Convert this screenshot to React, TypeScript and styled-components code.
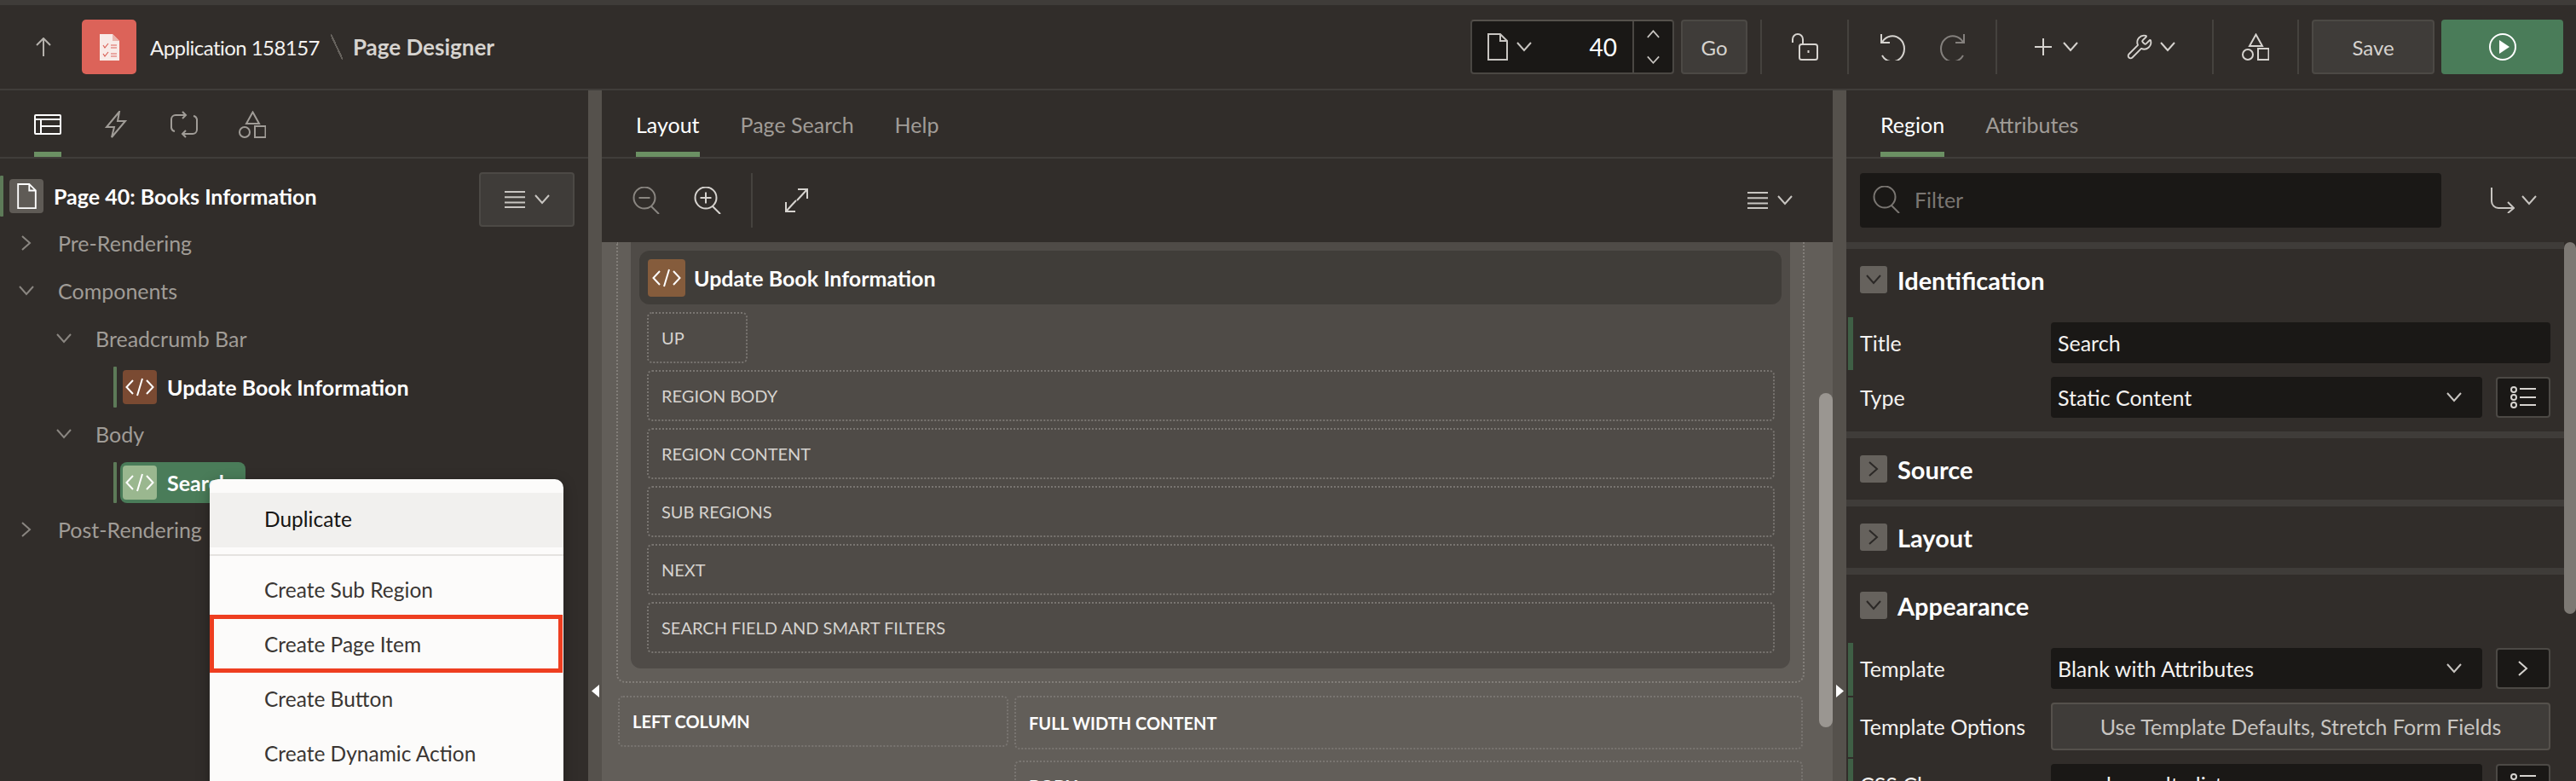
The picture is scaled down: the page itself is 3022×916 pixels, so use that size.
import * as React from "react";
import styled, { createGlobalStyle } from "styled-components";
import { Wrench } from "lucide-react";

const GlobalStyle = createGlobalStyle`
  html, body {
    margin: 0;
    height: 100%;
    overflow: hidden;
    background: #312d2a;
  }
  * {
    box-sizing: border-box;
  }
`;

const Page = styled.div`
  position: relative;
  width: 3022px;
  height: 916px;
  overflow: hidden;
  display: flex;
  flex-direction: column;
  background: #312d2a;
  color: #f1efed;
  font-family: Lato, "Liberation Sans", sans-serif;
  font-size: 25px;
  border-top: 6px solid #3f3c39;
`;

const Header = styled.header`
  flex: none;
  height: 100px;
  display: flex;
  align-items: center;
  padding: 18px 15px 18px 42px;
  border-bottom: 2px solid #403d3a;
`;

const BackArrow = styled.span`
  width: 54px;
  display: flex;
  color: #b5b1ac;
`;

const AppBadge = styled.div`
  width: 64px;
  height: 64px;
  margin-right: 16px;
  border-radius: 5px;
  background: #dc6359;
  display: flex;
  align-items: center;
  justify-content: center;
`;

const AppName = styled.span`
  color: #f4f2f0;
  font-size: 24px;
  letter-spacing: -0.55px;
`;

const Slash = styled.span`
  width: 14px;
  height: 30px;
  margin: 0 12px 0 13px;
  background: linear-gradient(
    to top right,
    transparent 46%,
    #66625d 46%,
    #66625d 54%,
    transparent 54%
  );
`;

const ScreenName = styled.span`
  color: #d6d3cf;
  font-size: 26px;
  font-weight: 700;
`;

const HeaderActions = styled.div`
  margin-left: auto;
  display: flex;
  align-items: center;
`;

const PageSwitch = styled.div`
  width: 239px;
  height: 64px;
  display: flex;
  background: #1a1816;
  border: 2px solid #4a4743;
  border-top-color: #55514c;
  border-radius: 4px;
  color: #c8c5c1;
`;

const PageNumber = styled.div`
  flex: 1;
  display: flex;
  align-items: center;
  padding-left: 18px;
  gap: 10px;
`;

const PageValue = styled.span`
  margin-left: auto;
  margin-right: 18px;
  color: #fff;
  font-size: 28px;
`;

const Spinner = styled.div`
  width: 47px;
  display: flex;
  flex-direction: column;
  align-items: center;
  justify-content: space-around;
  border-left: 2px solid #4a4743;
`;

const HeaderButton = styled.button<{ $width: number; $primary?: boolean }>`
  width: ${(p) => p.$width}px;
  height: 64px;
  display: flex;
  align-items: center;
  justify-content: center;
  padding: 0;
  font: inherit;
  font-size: 24px;
  color: ${(p) => (p.$primary ? "#fff" : "#d6d3cf")};
  background: ${(p) => (p.$primary ? "#4a7c59" : "#3f3c39")};
  border: ${(p) => (p.$primary ? "none" : "2px solid #4c4945")};
  border-radius: 4px;
`;

const GoButton = styled(HeaderButton)`
  margin: 0 15px 0 8px;
`;

const SaveButton = styled(HeaderButton)`
  margin: 0 8px 0 15px;
`;

const ToolGroup = styled.div<{ $width: number; $gap: number }>`
  width: ${(p) => p.$width}px;
  height: 64px;
  display: flex;
  align-items: center;
  justify-content: center;
  gap: ${(p) => p.$gap}px;
  color: #d6d3cf;
  border-left: 2px solid #45423e;
`;

const LastToolGroup = styled(ToolGroup)`
  border-right: 2px solid #45423e;
`;

const ToolPair = styled.span<{ $gap: number }>`
  display: flex;
  align-items: center;
  gap: ${(p) => p.$gap}px;
`;

const Glyph = styled.svg<{ $dim?: boolean }>`
  display: block;
  flex: none;
  fill: none;
  stroke: currentColor;
  stroke-width: 2;
  opacity: ${(p) => (p.$dim ? 0.5 : 1)};
`;

const ArrowGlyph = styled(Glyph)`
  fill: #fff;
  stroke: none;
`;

const Workspace = styled.main`
  flex: 1;
  min-height: 0;
  display: flex;
`;

const Panel = styled.section<{ $width: number }>`
  position: relative;
  flex: none;
  width: ${(p) => p.$width}px;
  display: flex;
  flex-direction: column;
  min-height: 0;
`;

const Splitter = styled.div`
  flex: none;
  width: 16px;
  padding: 697px 0 0 4px;
  background: #55514c;
  color: #fff;
`;

const TabBar = styled.nav<{ $gap: number }>`
  flex: none;
  height: 80px;
  display: flex;
  gap: ${(p) => p.$gap}px;
  padding-left: 40px;
  border-bottom: 2px solid #403d3a;
`;

const Tab = styled.div<{ $active?: boolean }>`
  height: 78px;
  display: flex;
  align-items: center;
  padding-top: 8px;
  color: ${(p) => (p.$active ? "#fff" : "#a09c97")};
  border-bottom: 6px solid ${(p) => (p.$active ? "#6b9063" : "transparent")};
`;

const Tree = styled.div`
  flex: 1;
  padding-top: 16px;
`;

const TreeRow = styled.div<{ $level: number }>`
  height: 56px;
  display: flex;
  align-items: center;
  padding-left: ${(p) => p.$level * 44 + 8}px;
  padding-bottom: 2px;
  color: #a09c97;
`;

const Toggle = styled.span`
  width: 60px;
  padding-left: 14px;
  color: #8a8681;
`;

const NodeRow = styled.div<{ $indent: number }>`
  height: 56px;
  display: flex;
  align-items: center;
  padding-left: ${(p) => p.$indent}px;
`;

const NodeAccent = styled.span`
  width: 4px;
  height: 48px;
  margin-right: 4px;
  background: #5d7a58;
  border-radius: 1px;
`;

const NodePill = styled.div<{ $selected?: boolean }>`
  height: 48px;
  display: flex;
  align-items: center;
  gap: 12px;
  padding: 0 17px 0 3px;
  border-radius: 8px;
  color: #fff;
  font-weight: 700;
  background: ${(p) => (p.$selected ? "#4a7c59" : "transparent")};
`;

const NodeIcon = styled.span<{ $color: string }>`
  width: 40px;
  height: 40px;
  display: flex;
  align-items: center;
  justify-content: center;
  border-radius: 4px;
  color: #fff;
  background: ${(p) => p.$color};
`;

const TreeMenuButton = styled.button`
  align-self: flex-start;
  width: 112px;
  height: 64px;
  margin: 0 16px 0 auto;
  display: flex;
  align-items: center;
  justify-content: center;
  gap: 11px;
  padding: 0;
  color: #c8c5c1;
  background: #3f3c39;
  border: 2px solid #4c4945;
  border-radius: 4px;
`;

const Toolbar = styled.div`
  flex: none;
  height: 98px;
  display: flex;
  align-items: center;
  padding: 0 0 0 36px;
`;

const ZoomButton = styled.span<{ $dim?: boolean }>`
  width: 72px;
  display: flex;
  color: ${(p) => (p.$dim ? "#8a8681" : "#d6d3cf")};
`;

const ToolbarRule = styled.span`
  width: 2px;
  height: 64px;
  margin: 0 38px 0 -5px;
  background: #45423e;
`;

const ExpandIcon = styled.span`
  display: flex;
  color: #d6d3cf;
`;

const ToolbarEnd = styled.span`
  margin-left: auto;
  margin-right: 47px;
  display: flex;
  align-items: center;
  gap: 11px;
  color: #c8c5c1;
`;

const Canvas = styled.div`
  position: relative;
  flex: 1;
  min-height: 0;
  overflow: hidden;
  padding-left: 17px;
  background: #625e59;
`;

const CanvasScrollbar = styled.div`
  position: absolute;
  top: 177px;
  right: 0;
  width: 16px;
  height: 392px;
  border-radius: 8px;
  background: #9a9691;
`;

const OuterRegion = styled.div`
  width: 1394px;
  height: 517px;
  padding: 0 15px;
  border: 2px dotted #827e79;
  border-top: none;
  border-radius: 0 0 10px 10px;
`;

const RegionCard = styled.div`
  width: 1360px;
  height: 500px;
  padding: 10px 10px 0;
  background: #4f4b47;
  border-radius: 0 0 12px 12px;
`;

const RegionTitleBar = styled.div`
  height: 63px;
  display: flex;
  align-items: center;
  gap: 10px;
  padding-left: 10px;
  font-weight: 700;
  color: #fff;
  background: #403d39;
  border-radius: 12px;
`;

const RegionTitleIcon = styled.span`
  width: 44px;
  height: 44px;
  display: flex;
  align-items: center;
  justify-content: center;
  border-radius: 4px;
  background: #855c3c;
`;

const SlotStack = styled.div`
  display: flex;
  flex-direction: column;
  gap: 8px;
  padding: 9px 8px 0 9px;
`;

const Slot = styled.div<{ $width?: number; $strong?: boolean }>`
  width: ${(p) => (p.$width ? `${p.$width}px` : "auto")};
  height: 60px;
  display: flex;
  align-items: center;
  padding-left: 15px;
  font-size: 20px;
  text-transform: uppercase;
  font-weight: ${(p) => (p.$strong ? 700 : 400)};
  color: ${(p) => (p.$strong ? "#fff" : "#d6d3cf")};
  border: 2px dotted #797571;
  border-radius: 6px;
`;

const PageColumns = styled.div`
  display: flex;
  gap: 7px;
  margin: 15px 0 0 2px;
`;

const RightColumn = styled.div`
  display: flex;
  flex-direction: column;
  gap: 13px;
`;

const TallSlot = styled(Slot)`
  height: 63px;
`;

const FilterBar = styled.div`
  flex: none;
  height: 98px;
  display: flex;
  align-items: center;
  padding-left: 16px;
`;

const FilterBox = styled.div`
  width: 682px;
  height: 64px;
  display: flex;
  align-items: center;
  gap: 17px;
  padding: 0 0 2px 15px;
  color: #7a7672;
  background: #1a1816;
  border-radius: 4px;
`;

const RouteMenu = styled.span`
  margin-left: 58px;
  display: flex;
  align-items: center;
  gap: 8px;
  color: #c8c5c1;
`;

const PropertyList = styled.div`
  flex: 1;
  min-height: 0;
  overflow: hidden;
  padding-right: 14px;
`;

const PropertyScrollbar = styled.div`
  position: absolute;
  top: 178px;
  right: 0;
  width: 14px;
  height: 436px;
  border-radius: 7px;
  background: #7d7974;
`;

const Group = styled.div<{ $open?: boolean }>`
  padding-bottom: ${(p) => (p.$open ? "10px" : "0")};
  border-top: 8px solid #3f3c39;
`;

const GroupHead = styled.div<{ $open?: boolean }>`
  height: 32px;
  display: flex;
  align-items: center;
  gap: 12px;
  margin: 20px 0 ${(p) => (p.$open ? "28px" : "20px")} 16px;
  font-size: 29px;
  font-weight: 700;
  color: #fff;
`;

const GroupToggle = styled.span`
  width: 32px;
  height: 32px;
  display: flex;
  align-items: center;
  justify-content: center;
  color: #2b2826;
  background: #66625d;
  border-radius: 3px;
`;

const FieldRow = styled.div<{ $accent?: boolean }>`
  margin: 2px 0 0 2px;
  padding: 6px 16px ${(p) => (p.$accent ? "8px" : "6px")} 8px;
  display: flex;
  align-items: center;
  color: #f4f2f0;
  border-left: 6px solid ${(p) => (p.$accent ? "#3f5f45" : "transparent")};
`;

const FieldLabel = styled.span`
  width: 224px;
  flex: none;
`;

const FieldInput = styled.div`
  flex: 1;
  height: 48px;
  display: flex;
  align-items: center;
  justify-content: space-between;
  padding: 0 24px 0 8px;
  background: #1a1816;
  border-radius: 4px;
  color: #f4f2f0;
`;

const SelectChevron = styled.span`
  display: flex;
  color: #c8c5c1;
`;

const FieldSideButton = styled.span`
  width: 64px;
  height: 48px;
  margin-left: 16px;
  flex: none;
  display: flex;
  align-items: center;
  justify-content: center;
  color: #d6d3cf;
  background: #1a1816;
  border: 2px solid #4c4945;
  border-radius: 4px;
`;

const FieldWideButton = styled.div`
  flex: 1;
  height: 56px;
  display: flex;
  align-items: center;
  justify-content: center;
  color: #c8c5c1;
  background: #3f3c39;
  border: 2px solid #55514c;
  border-radius: 4px;
`;

const ContextMenu = styled.div`
  position: absolute;
  left: 246px;
  top: 556px;
  width: 415px;
  height: 400px;
  padding-top: 16px;
  font-size: 24.5px;
  background: #fcfbfa;
  border-radius: 10px 10px 0 0;
  box-shadow: 0 4px 16px rgba(0, 0, 0, 0.3);
`;

const MenuItem = styled.div<{ $hover?: boolean; $marked?: boolean }>`
  position: relative;
  height: 64px;
  display: flex;
  align-items: center;
  padding: 0 0 3px 64px;
  color: ${(p) => (p.$hover ? "#161513" : "#3a3633")};
  background: ${(p) => (p.$hover ? "#f1f0ee" : "transparent")};

  ${(p) =>
    p.$marked &&
    `&::after {
      content: "";
      position: absolute;
      inset: -4px 1px 0 0;
      border: 5px solid #ee3e20;
    }`}
`;

const MenuRule = styled.div`
  height: 2px;
  margin: 8px 0 9px;
  background: #e5e3e0;
`;

type Direction = "up" | "down" | "right";

const chevronPaths: Record<Direction, string> = {
  up: "M1 13 9 4l8 9",
  down: "M1 4l8 9 8-9",
  right: "M4 1l9 8-9 8",
};

const Chevron: React.FC<{ dir?: Direction; size?: number }> = ({
  dir = "down",
  size = 18,
}) => (
  <Glyph width={size} height={size} viewBox="0 0 18 18" strokeWidth="1.6">
    <path d={chevronPaths[dir]} />
  </Glyph>
);

const CodeIcon: React.FC = () => (
  <Glyph width="34" height="22" viewBox="0 0 34 22" strokeWidth="1.7">
    <path d="M9 3 1.500 11 9 19M25 3l7.500 8-7.500 8M20 1l-6 20" />
  </Glyph>
);

const DocIcon: React.FC<{ width?: number; height?: number }> = ({
  width = 24,
  height = 32,
}) => (
  <Glyph width={width} height={height} viewBox="0 0 24 32">
    <path d="M1 1h14l8 8v22H1zM15 1v8h8" />
  </Glyph>
);

const ListIcon: React.FC = () => (
  <Glyph width="24" height="20" viewBox="0 0 24 20">
    <path d="M0 1h24M0 7.300h24M0 13.500h24M0 19h24" />
  </Glyph>
);

const ShapesIcon: React.FC = () => (
  <Glyph width="32" height="32" viewBox="0 0 32 32">
    <path d="M16.500 1.500 24 15H9z" />
    <circle cx="7" cy="25" r="6" />
    <rect x="19" y="18" width="12.500" height="13" />
  </Glyph>
);

const MagnifierIcon: React.FC<{ mark?: "plus" | "minus" }> = ({ mark }) => (
  <Glyph width="32" height="32" viewBox="0 0 32 32">
    <circle cx="14" cy="13" r="12.500" />
    <path d="M22 23l9 9" />
    {mark && <path d="M7.500 13h13" />}
    {mark === "plus" && <path d="M14 6.500v13" />}
  </Glyph>
);

const LovIcon: React.FC = () => (
  <Glyph width="30" height="26" viewBox="0 0 30 26">
    <circle cx="4" cy="4" r="3" />
    <circle cx="4" cy="13" r="3" />
    <circle cx="4" cy="22" r="3" />
    <path d="M11 3h19M11 13h19M11 22h19" />
  </Glyph>
);

const UndoArc: React.FC<{ dim?: boolean; flip?: boolean }> = ({ dim, flip }) => (
  <Glyph
    $dim={dim}
    width="30"
    height="32"
    viewBox="0 0 30 32"
    transform={flip ? "scale(-1 1)" : undefined}
  >
    <path d="M2 1v10h10M3 10.500A14 15 0 1 1 3 26" />
  </Glyph>
);

const App: React.FC = () => {
  return (
    <Page>
      <GlobalStyle />
      <Header>
        <BackArrow>
          <Glyph width="18" height="22" viewBox="0 0 18 22" strokeWidth="2.4">
            <path d="M9 22V2M1 9l8-8 8 8" />
          </Glyph>
        </BackArrow>
        <AppBadge>
          <svg width="23" height="31" viewBox="0 0 23 31">
            <path d="M0 0h15l8 8v23H0z" fill="#f8ebe8" />
            <path d="M15 0v8h8z" fill="#e9b3ac" />
            <path
              d="M4 13l2 3 4-5M4 23l2 3 4-5M13 13h7M13 16h7M13 23h7M13 26h7"
              fill="none"
              stroke="#d9635a"
              strokeWidth="1.2"
            />
          </svg>
        </AppBadge>
        <AppName>Application 158157</AppName>
        <Slash />
        <ScreenName>Page Designer</ScreenName>
        <HeaderActions>
          <PageSwitch>
            <PageNumber>
              <DocIcon />
              <Chevron />
              <PageValue>40</PageValue>
            </PageNumber>
            <Spinner>
              <Chevron dir="up" size={15} />
              <Chevron size={15} />
            </Spinner>
          </PageSwitch>
          <GoButton $width={78}>Go</GoButton>
          <ToolGroup $width={102} $gap={0}>
            <Glyph width="31" height="32" viewBox="0 0 31 32">
              <path d="M1 11V7a6 6 0 0 1 12 0v6" />
              <rect x="9" y="13" width="21" height="18" rx="2.500" />
              <path d="M19.500 20v3" />
            </Glyph>
          </ToolGroup>
          <ToolGroup $width={174} $gap={41}>
            <UndoArc />
            <UndoArc dim flip />
          </ToolGroup>
          <ToolGroup $width={254} $gap={56}>
            <ToolPair $gap={13}>
              <Glyph width="20" height="20" viewBox="0 0 20 20">
                <path d="M0 10h20M10 0v20" />
              </Glyph>
              <Chevron />
            </ToolPair>
            <ToolPair $gap={8}>
              <Wrench size={32} strokeWidth={1.4} />
              <Chevron />
            </ToolPair>
          </ToolGroup>
          <LastToolGroup $width={102} $gap={0}>
            <ShapesIcon />
          </LastToolGroup>
          <SaveButton $width={144}>Save</SaveButton>
          <HeaderButton $width={143} $primary>
            <svg width="32" height="32" viewBox="0 0 32 32">
              <circle cx="16" cy="16" r="15" fill="none" stroke="#fff" strokeWidth="2" />
              <path d="M12 8l12 8-12 8z" fill="#fff" />
            </svg>
          </HeaderButton>
        </HeaderActions>
      </Header>

      <Workspace>
        <Panel $width={690}>
          <TabBar $gap={48}>
            <Tab $active>
              <Glyph width="32" height="24" viewBox="0 0 32 24" color="#fff">
                <rect x="1" y="1" width="30" height="22" rx="1" />
                <path d="M1 6h30M8 6v17M8 14h23" />
              </Glyph>
            </Tab>
            <Tab>
              <Glyph width="32" height="32" viewBox="0 0 32 32">
                <path d="M20 1 5 19h9l-3 12 16-19h-9z" />
              </Glyph>
            </Tab>
            <Tab>
              <Glyph width="32" height="32" viewBox="0 0 32 32">
                <path d="M18 5H6a5 5 0 0 0-5 5v10a5 5 0 0 0 4 4M14 27h12a5 5 0 0 0 5-5V10a5 5 0 0 0-4-4M14 1l4 4-4 4M18 23l-4 4 4 4" />
              </Glyph>
            </Tab>
            <Tab>
              <ShapesIcon />
            </Tab>
          </TabBar>
          <Tree>
            <NodeRow $indent={0}>
              <NodeAccent />
              <NodePill>
                <NodeIcon $color="#5f5b56">
                  <DocIcon width={23} height={30} />
                </NodeIcon>
                Page 40: Books Information
              </NodePill>
              <TreeMenuButton>
                <ListIcon />
                <Chevron />
              </TreeMenuButton>
            </NodeRow>
            <TreeRow $level={0}>
              <Toggle>
                <Chevron dir="right" />
              </Toggle>
              Pre-Rendering
            </TreeRow>
            <TreeRow $level={0}>
              <Toggle>
                <Chevron />
              </Toggle>
              Components
            </TreeRow>
            <TreeRow $level={1}>
              <Toggle>
                <Chevron />
              </Toggle>
              Breadcrumb Bar
            </TreeRow>
            <NodeRow $indent={133}>
              <NodeAccent />
              <NodePill>
                <NodeIcon $color="#7a4a32">
                  <CodeIcon />
                </NodeIcon>
                Update Book Information
              </NodePill>
            </NodeRow>
            <TreeRow $level={1}>
              <Toggle>
                <Chevron />
              </Toggle>
              Body
            </TreeRow>
            <NodeRow $indent={133}>
              <NodeAccent />
              <NodePill $selected>
                <NodeIcon $color="#9ab78f">
                  <CodeIcon />
                </NodeIcon>
                Search
              </NodePill>
            </NodeRow>
            <TreeRow $level={0}>
              <Toggle>
                <Chevron dir="right" />
              </Toggle>
              Post-Rendering
            </TreeRow>
          </Tree>
        </Panel>

        <Splitter>
          <ArrowGlyph width="9" height="15" viewBox="0 0 9 15">
            <path d="M9 0v15L0 7.500z" />
          </ArrowGlyph>
        </Splitter>

        <Panel $width={1444}>
          <TabBar $gap={48}>
            <Tab $active>Layout</Tab>
            <Tab>Page Search</Tab>
            <Tab>Help</Tab>
          </TabBar>
          <Toolbar>
            <ZoomButton $dim>
              <MagnifierIcon mark="minus" />
            </ZoomButton>
            <ZoomButton>
              <MagnifierIcon mark="plus" />
            </ZoomButton>
            <ToolbarRule />
            <ExpandIcon>
              <Glyph width="27" height="28" viewBox="0 0 27 28">
                <path d="M14 14 26 1M15 1h11v11M13 14 1 27M1 16v11h11" />
              </Glyph>
            </ExpandIcon>
            <ToolbarEnd>
              <ListIcon />
              <Chevron />
            </ToolbarEnd>
          </Toolbar>
          <Canvas>
            <OuterRegion>
              <RegionCard>
                <RegionTitleBar>
                  <RegionTitleIcon>
                    <CodeIcon />
                  </RegionTitleIcon>
                  Update Book Information
                </RegionTitleBar>
                <SlotStack>
                  <Slot $width={118}>Up</Slot>
                  <Slot>Region Body</Slot>
                  <Slot>Region Content</Slot>
                  <Slot>Sub Regions</Slot>
                  <Slot>Next</Slot>
                  <Slot>Search Field and Smart Filters</Slot>
                </SlotStack>
              </RegionCard>
            </OuterRegion>
            <PageColumns>
              <Slot $width={458} $strong>
                Left Column
              </Slot>
              <RightColumn>
                <TallSlot $width={925} $strong>
                  Full Width Content
                </TallSlot>
                <Slot $width={925} $strong>
                  Body
                </Slot>
              </RightColumn>
            </PageColumns>
            <CanvasScrollbar />
          </Canvas>
        </Panel>

        <Splitter>
          <ArrowGlyph width="9" height="15" viewBox="0 0 9 15">
            <path d="M0 0v15l9-7.500z" />
          </ArrowGlyph>
        </Splitter>

        <Panel $width={856}>
          <TabBar $gap={48}>
            <Tab $active>Region</Tab>
            <Tab>Attributes</Tab>
          </TabBar>
          <FilterBar>
            <FilterBox>
              <MagnifierIcon />
              Filter
            </FilterBox>
            <RouteMenu>
              <Glyph width="28" height="30" viewBox="0 0 28 30">
                <path d="M1 0v16a8 8 0 0 0 8 8h18M20 17l7 7-7 6" />
              </Glyph>
              <Chevron />
            </RouteMenu>
          </FilterBar>
          <PropertyList>
            <Group $open>
              <GroupHead $open>
                <GroupToggle>
                  <Chevron />
                </GroupToggle>
                Identification
              </GroupHead>
              <FieldRow $accent>
                <FieldLabel>Title</FieldLabel>
                <FieldInput>Search</FieldInput>
              </FieldRow>
              <FieldRow>
                <FieldLabel>Type</FieldLabel>
                <FieldInput>
                  Static Content
                  <SelectChevron>
                    <Chevron />
                  </SelectChevron>
                </FieldInput>
                <FieldSideButton>
                  <LovIcon />
                </FieldSideButton>
              </FieldRow>
            </Group>
            <Group>
              <GroupHead>
                <GroupToggle>
                  <Chevron dir="right" />
                </GroupToggle>
                Source
              </GroupHead>
            </Group>
            <Group>
              <GroupHead>
                <GroupToggle>
                  <Chevron dir="right" />
                </GroupToggle>
                Layout
              </GroupHead>
            </Group>
            <Group $open>
              <GroupHead $open>
                <GroupToggle>
                  <Chevron />
                </GroupToggle>
                Appearance
              </GroupHead>
              <FieldRow $accent>
                <FieldLabel>Template</FieldLabel>
                <FieldInput>
                  Blank with Attributes
                  <SelectChevron>
                    <Chevron />
                  </SelectChevron>
                </FieldInput>
                <FieldSideButton>
                  <Chevron dir="right" />
                </FieldSideButton>
              </FieldRow>
              <FieldRow $accent>
                <FieldLabel>Template Options</FieldLabel>
                <FieldWideButton>Use Template Defaults, Stretch Form Fields</FieldWideButton>
              </FieldRow>
              <FieldRow $accent>
                <FieldLabel>CSS Classes</FieldLabel>
                <FieldInput>search-results-list</FieldInput>
                <FieldSideButton>
                  <LovIcon />
                </FieldSideButton>
              </FieldRow>
            </Group>
          </PropertyList>
          <PropertyScrollbar />
        </Panel>
      </Workspace>

      <ContextMenu>
        <MenuItem $hover>Duplicate</MenuItem>
        <MenuRule />
        <MenuItem>Create Sub Region</MenuItem>
        <MenuItem $marked>Create Page Item</MenuItem>
        <MenuItem>Create Button</MenuItem>
        <MenuItem>Create Dynamic Action</MenuItem>
      </ContextMenu>
    </Page>
  );
};

export default App;
